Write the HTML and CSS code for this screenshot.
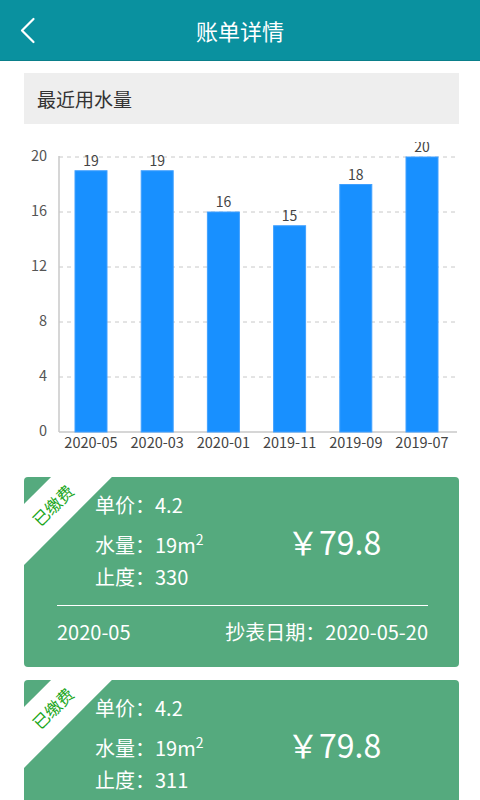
FILE: index.html
```html
<!DOCTYPE html>
<html lang="zh-CN">
<head>
    <meta charset="UTF-8">
    <meta name="viewport" content="width=device-width, initial-scale=1.0">
    <title>账单详情</title>
    <link rel="stylesheet" href="styles.css">
</head>
<body>
    <header class="top-bar">
        <span class="back">
            <svg width="20" height="30" viewBox="0 0 20 30">
                <polyline points="13.5,9 2,20.5 13.5,32" transform="translate(0,-6)" fill="none" stroke="#fff" stroke-width="2.2" stroke-linecap="round" stroke-linejoin="round"/>
            </svg>
        </span>
        <h1 class="title">账单详情</h1>
    </header>

    <div class="section-head">最近用水量</div>

    <svg class="chart" width="480" height="318" viewBox="0 142 480 318">
        <g class="grid">
            <line x1="59" y1="157" x2="456" y2="157"/>
            <line x1="59" y1="212" x2="456" y2="212"/>
            <line x1="59" y1="267" x2="456" y2="267"/>
            <line x1="59" y1="322" x2="456" y2="322"/>
            <line x1="59" y1="377" x2="456" y2="377"/>
        </g>
        <line class="axis" x1="59" y1="156" x2="59" y2="432"/>
        <line class="axis" x1="59" y1="432" x2="457" y2="432"/>
        <g class="y-labels">
            <text x="47" y="157">20</text>
            <text x="47" y="212">16</text>
            <text x="47" y="267">12</text>
            <text x="47" y="322">8</text>
            <text x="47" y="377">4</text>
            <text x="47" y="432">0</text>
        </g>
        <g id="bars"></g>
    </svg>

    <div class="bill-list">
        <div class="bill">
            <div class="ribbon">已缴费</div>
            <div class="bill-top">
                <div class="bill-info">
                    <div class="row">单价：4.2</div>
                    <div class="row row-sup">水量：19m<sup>2</sup></div>
                    <div class="row">止度：330</div>
                </div>
                <div class="price">￥79.8</div>
            </div>
            <div class="bill-bottom">
                <span>2020-05</span>
                <span>抄表日期：2020-05-20</span>
            </div>
        </div>

        <div class="bill">
            <div class="ribbon">已缴费</div>
            <div class="bill-top">
                <div class="bill-info">
                    <div class="row">单价：4.2</div>
                    <div class="row row-sup">水量：19m<sup>2</sup></div>
                    <div class="row">止度：311</div>
                </div>
                <div class="price">￥79.8</div>
            </div>
            <div class="bill-bottom">
                <span>2020-03</span>
                <span>抄表日期：2020-03-20</span>
            </div>
        </div>
    </div>

    <script>
        // 柱状图数据
        var data = [
            { month: '2020-05', value: 19 },
            { month: '2020-03', value: 19 },
            { month: '2020-01', value: 16 },
            { month: '2019-11', value: 15 },
            { month: '2019-09', value: 18 },
            { month: '2019-07', value: 20 }
        ];

        var ns = 'http://www.w3.org/2000/svg';
        var g = document.getElementById('bars');
        var base = 432, unit = 13.75, step = 66.2;

        data.forEach(function (d, i) {
            var cx = 91 + step * i;
            var top = base - d.value * unit;

            var rect = document.createElementNS(ns, 'rect');
            rect.setAttribute('class', 'bar');
            rect.setAttribute('x', cx - 16);
            rect.setAttribute('y', top);
            rect.setAttribute('width', 32);
            rect.setAttribute('height', base - top);
            g.appendChild(rect);

            var val = document.createElementNS(ns, 'text');
            val.setAttribute('class', 'value');
            val.setAttribute('x', cx);
            val.setAttribute('y', top - 5);
            val.textContent = d.value;
            g.appendChild(val);

            var lab = document.createElementNS(ns, 'text');
            lab.setAttribute('class', 'x-label');
            lab.setAttribute('x', cx);
            lab.setAttribute('y', 448);
            lab.textContent = d.month;
            g.appendChild(lab);
        });
    </script>
</body>
</html>
```

FILE: styles.css
```css
body {
    margin: 0;
    font-family: "Noto Sans CJK SC", "Noto Sans", sans-serif;
    background: #fff;
    color: #333;
}
.top-bar {
    position: relative;
    height: 60px;
    background: #0a919f;
    border-bottom: 1px solid #0a7f8a;
    display: flex;
    align-items: center;
    justify-content: center;
}
.back {
    position: absolute;
    left: 20px;
    top: 16px;
}
.title {
    margin: 0;
    font-size: 22px;
    font-weight: normal;
    color: #fff;
}
.section-head {
    margin: 12px 21px 0 24px;
    height: 51px;
    line-height: 51px;
    padding-left: 13px;
    background: #eeeeee;
    font-size: 19px;
    color: #333;
}
.chart {
    display: block;
    margin-top: 18px;
    font-family: "Noto Sans CJK SC", "Noto Sans", sans-serif;
}
.grid line {
    stroke: #c8c8c8;
    stroke-width: 1;
    stroke-dasharray: 4 4;
}
.axis {
    stroke: #c8c8c8;
    stroke-width: 1.5;
}
.y-labels text {
    font-size: 14.5px;
    fill: #555;
    text-anchor: end;
    dominant-baseline: middle;
}
.bar {
    fill: #1890ff;
    stroke: #40a0ff;
    stroke-width: 1;
}
.value {
    font-size: 14px;
    fill: #444;
    text-anchor: middle;
}
.x-label {
    font-size: 14.5px;
    fill: #444;
    text-anchor: middle;
}
.bill-list {
    margin: 17px 21px 0 24px;
}
.bill {
    position: relative;
    overflow: hidden;
    background: #55aa7e;
    border-radius: 4px;
    color: #fff;
    padding: 12px 31px 19px 33px;
    margin-bottom: 13px;
}
.ribbon {
    position: absolute;
    left: -36px;
    top: 7px;
    width: 130px;
    height: 43px;
    line-height: 43px;
    background: #fff;
    color: #1aa61a;
    font-size: 16.5px;
    text-align: center;
    transform: rotate(-45deg);
}
.bill-top {
    display: flex;
    align-items: center;
    padding-left: 38px;
}
.bill-info {
    width: 192px;
}
.row {
    font-size: 20px;
    line-height: 32px;
}
.row-sup {
    padding-top: 8px;
}
.row sup {
    font-size: 14px;
    line-height: 0;
    vertical-align: 8px;
}
.price {
    font-size: 32px;
    line-height: 40px;
}
.bill-bottom {
    margin-top: 12px;
    border-top: 1px solid #fff;
    padding-top: 10px;
    display: flex;
    justify-content: space-between;
    font-size: 20px;
    line-height: 32px;
}
```
